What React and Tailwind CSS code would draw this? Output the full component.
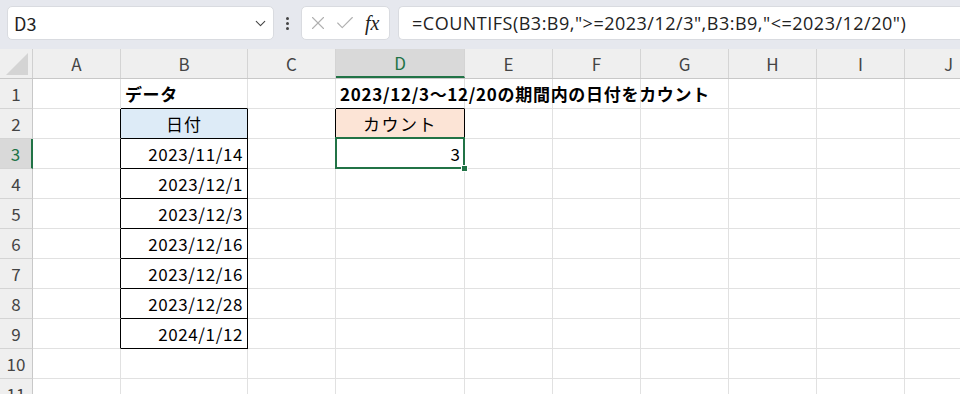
import { ChevronDown, X, Check } from 'lucide-react'

const FONT = { fontFamily: '"Noto Sans CJK JP", "Noto Sans", sans-serif' }

const COLUMNS = [
  { key: 'A', w: 'w-[88px]' },
  { key: 'B', w: 'w-[127px]' },
  { key: 'C', w: 'w-[88px]' },
  { key: 'D', w: 'w-[129px]' },
  { key: 'E', w: 'w-[88px]' },
  { key: 'F', w: 'w-[88px]' },
  { key: 'G', w: 'w-[88px]' },
  { key: 'H', w: 'w-[88px]' },
  { key: 'I', w: 'w-[88px]' },
  { key: 'J', w: 'w-[88px]' },
]

const dates = ['2023/11/14', '2023/12/1', '2023/12/3', '2023/12/16', '2023/12/16', '2023/12/28', '2024/1/12']

// which cells get a black edge
function edges(col, row) {
  const right =
    (col === 'A' && row >= 2 && row <= 9) ||
    (col === 'B' && row >= 2 && row <= 9) ||
    (col === 'C' && row === 2) ||
    (col === 'D' && row === 2)
  const bottom = (col === 'B' && row >= 1 && row <= 9) || (col === 'D' && (row === 1 || row === 2))
  return { right, bottom }
}

function cellContent(col, row) {
  if (col === 'B' && row === 1) return { text: 'データ', cls: 'font-bold pl-[4px] text-[17px] tracking-[0.6px]' }
  if (col === 'D' && row === 1)
    return { text: '2023/12/3～12/20の期間内の日付をカウント', cls: 'font-bold pl-[4px] text-[17px] tracking-[0.7px]' }
  if (col === 'B' && row === 2) return { text: '日付', cls: 'justify-center bg-[#ddebf7] text-[17px] tracking-[1px]' }
  if (col === 'D' && row === 2) return { text: 'カウント', cls: 'justify-center bg-[#fce4d6] text-[17px] tracking-[1.5px]' }
  if (col === 'B' && row >= 3 && row <= 9)
    return { text: dates[row - 3], cls: 'justify-end pr-[4px] text-[17px] tracking-[0.6px]' }
  if (col === 'D' && row === 3) return { text: '3', cls: 'justify-end pr-[4px] text-[17px]' }
  return { text: '', cls: 'text-[16px]' }
}

function Cell({ col, row }) {
  const { right, bottom } = edges(col.key, row)
  const { text, cls } = cellContent(col.key, row)
  const selected = col.key === 'D' && row === 3
  return (
    <div
      className={`relative flex h-[30px] shrink-0 items-center border-r border-b text-black ${col.w} ${
        right ? 'border-r-black' : 'border-r-[#e1e1e1]'
      } ${bottom ? 'border-b-black' : 'border-b-[#e1e1e1]'} ${cls}`}
    >
      <span className="relative z-10 whitespace-nowrap">{text}</span>
      {selected && (
        <>
          <div className="absolute -top-[2px] -left-[1px] -right-[1px] -bottom-[1px] border-2 border-[#217346]" />
          <div className="absolute -right-[4px] -bottom-[4px] z-20 size-[7px] border border-white bg-[#217346]" />
        </>
      )}
    </div>
  )
}

export default function App() {
  return (
    <div className="h-[394px] w-[960px] overflow-hidden bg-white" style={FONT}>
      <div className="flex h-[49px] items-start bg-[#e6e8ee] pt-[6px]">
        <div className="ml-[7px] flex h-[34px] w-[267px] items-center justify-between rounded-[5px] border border-[#d9dbe0] bg-white pl-[6px] pr-[4px]">
          <span className="text-[18px] text-[#222]">D3</span>
          <ChevronDown className="size-[17px] text-[#444]" strokeWidth={1.5} />
        </div>
        <div className="flex h-[34px] w-[27px] flex-col items-center justify-center gap-[2px]">
          <span className="size-[3px] rounded-full bg-[#444]" />
          <span className="size-[3px] rounded-full bg-[#444]" />
          <span className="size-[3px] rounded-full bg-[#444]" />
        </div>
        <div className="flex h-[34px] w-[89px] items-center rounded-[5px] border border-[#d9dbe0] bg-white pl-[5px]">
          <X className="size-[22px] text-[#b0b0b0]" strokeWidth={1.2} />
          <Check className="ml-[5px] size-[22px] text-[#b0b0b0]" strokeWidth={1.2} />
          <span
            className="ml-[9px] text-[20px] italic text-[#222]"
            style={{ fontFamily: '"Liberation Serif", serif' }}
          >
            fx
          </span>
        </div>
        <div className="ml-[8px] flex h-[34px] flex-1 items-center rounded-l-[5px] border border-r-0 border-[#d9dbe0] bg-white pl-[13px]">
          <span
            className="whitespace-nowrap text-[18px] tracking-[0.5px] text-[#222]"
            style={{ fontFamily: '"Open Sans", "Noto Sans", sans-serif' }}
          >
            =COUNTIFS(B3:B9,"&gt;=2023/12/3",B3:B9,"&lt;=2023/12/20")
          </span>
        </div>
      </div>

      <div className="flex h-[30px] border-b border-b-[#c8c8c8] bg-[#efefef]">
        <div className="relative w-[33px] shrink-0 border-r border-r-[#d0d0d0]">
          <svg className="absolute bottom-[3px] right-[4px]" width="22" height="22" viewBox="0 0 22 22">
            <polygon points="22,0 22,22 0,22" fill="#d4d4d4" />
          </svg>
        </div>
        {COLUMNS.map((c) => (
          <div
            key={c.key}
            className={`flex shrink-0 items-center justify-center border-r border-r-[#d4d4d4] text-[17px] ${c.w} ${
              c.key === 'D' ? 'border-b-2 border-b-[#217346] bg-[#d9d9d9] text-[#217346]' : 'text-[#444]'
            }`}
          >
            {c.key}
          </div>
        ))}
      </div>

      {Array.from({ length: 11 }, (_, i) => i + 1).map((row) => (
        <div key={row} className="flex">
          <div
            className={`flex h-[30px] w-[33px] shrink-0 items-center justify-center border-b border-b-[#d4d4d4] text-[17px] ${
              row === 3
                ? 'border-r-2 border-r-[#217346] bg-[#d9d9d9] text-[#217346]'
                : 'border-r border-r-[#c8c8c8] bg-[#efefef] text-[#444]'
            }`}
          >
            {row}
          </div>
          {COLUMNS.map((c) => (
            <Cell key={c.key} col={c} row={row} />
          ))}
        </div>
      ))}
    </div>
  )
}
